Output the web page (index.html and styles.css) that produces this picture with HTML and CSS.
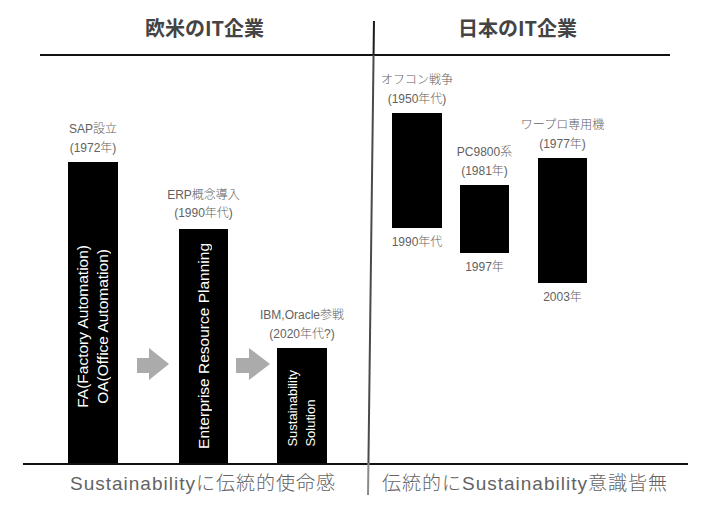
FILE: index.html
```html
<!DOCTYPE html>
<html lang="ja">
<head>
<meta charset="utf-8">
<title>欧米のIT企業 / 日本のIT企業</title>
<link rel="stylesheet" href="styles.css">
</head>
<body>
<div class="page">
  <header class="heads">
    <h1 class="title title-west">欧米のIT企業</h1>
    <h1 class="title title-jp">日本のIT企業</h1>
  </header>
  <div class="rule rule-top"></div>
  <main class="chart">
    <section class="chart-west">
      <div class="col col-w1">
        <p class="label">SAP設立<br>(1972年)</p>
        <div class="bar bar-w1"><span class="vtext vtext-lg">FA(Factory Automation)<br>OA(Office Automation)</span></div>
      </div>
      <svg class="arrow arrow-1" width="32" height="32" viewBox="0 0 32 32"><path d="M0 10H12V0L32 16L12 32V25H0Z" fill="#ababab"/></svg>
      <div class="col col-w2">
        <p class="label label-erp">ERP概念導入<br>(1990年代)</p>
        <div class="bar bar-w2"><span class="vtext vtext-lg">Enterprise Resource Planning</span></div>
      </div>
      <svg class="arrow arrow-2" width="34" height="32" viewBox="0 0 34 32"><path d="M0 10H13V0L34 16L13 32V25H0Z" fill="#ababab"/></svg>
      <div class="col col-w3">
        <p class="label">IBM,Oracle参戦<br>(2020年代?)</p>
        <div class="bar bar-w3"><span class="vtext vtext-sm">Sustainability<br>Solution</span></div>
      </div>
    </section>
    <section class="chart-jp">
      <div class="col col-j1">
        <p class="label">オフコン戦争<br>(1950年代)</p>
        <div class="bar bar-j1"></div>
        <p class="label label-below">1990年代</p>
      </div>
      <div class="col col-j2">
        <p class="label">PC9800系<br>(1981年)</p>
        <div class="bar bar-j2"></div>
        <p class="label label-below">1997年</p>
      </div>
      <div class="col col-j3">
        <p class="label">ワープロ専用機<br>(1977年)</p>
        <div class="bar bar-j3"></div>
        <p class="label label-below">2003年</p>
      </div>
    </section>
  </main>
  <div class="rule rule-bottom"></div>
  <footer class="foot">
    <p class="foot-text foot-west">Sustainabilityに伝統的使命感</p>
    <p class="foot-text foot-jp">伝統的にSustainability意識皆無</p>
  </footer>
  <div class="divider"></div>
</div>
</body>
</html>
```
FILE: styles.css
```css
html, body {
  margin: 0;
  padding: 0;
  background: #fff;
}
body {
  font-family: "Liberation Sans", "Noto Sans CJK JP", sans-serif;
}
.page {
  position: relative;
  width: 705px;
  height: 519px;
  overflow: hidden;
}

/* headings */
.heads {
  display: grid;
  grid-template-columns: 371px 1fr;
  height: 54px;
}
.title {
  margin: 0;
  padding-top: 16px;
  font-family: "Noto Sans CJK JP", sans-serif;
  font-size: 20px;
  font-weight: 700;
  line-height: 24px;
  color: #444;
  white-space: nowrap;
}
.title-west { padding-left: 145px; }
.title-jp { padding-left: 87px; }

/* rules */
.rule {
  height: 2px;
  background: #111;
}
.rule-top { margin: 0 35px 0 40px; }
.rule-bottom { margin: 0 17px 0 23px; height: 1.6px; }

/* chart */
.chart {
  display: grid;
  grid-template-columns: 371px 1fr;
  height: 407px;
}
.chart-west {
  display: flex;
  align-items: flex-end;
  padding-left: 68px;
}
.chart-jp {
  display: flex;
  align-items: flex-start;
}
.col {
  display: flex;
  flex-direction: column;
  align-items: center;
}
.label {
  margin: 0 -45px 4px;
  font-size: 12px;
  font-weight: 300;
  line-height: 19px;
  color: #626262;
  text-align: center;
  white-space: nowrap;
}
.label-erp { margin-bottom: 7px; line-height: 18px; }
.label-below { margin: 5px -45px 0; }

.bar {
  background: #000;
  align-self: stretch;
}
.col-w1 { width: 50px; }
.col-w2 { width: 49px; margin-left: 10px; }
.col-w3 { width: 50px; margin-left: 7px; }
.bar-w1 {
  height: 301px;
  display: flex;
  justify-content: center;
  align-items: center;
  padding-top: 27px;
  box-sizing: border-box;
}
.bar-w2 {
  height: 234px;
  display: flex;
  justify-content: center;
  align-items: center;
}
.bar-w3 {
  height: 115px;
  display: flex;
  justify-content: center;
  align-items: flex-end;
  padding-bottom: 16px;
  box-sizing: border-box;
}
.vtext {
  writing-mode: vertical-rl;
  transform: rotate(180deg);
  color: #fff;
  white-space: nowrap;
  font-family: "Liberation Sans", sans-serif;
}
.vtext-lg {
  font-size: 15.5px;
  line-height: 20px;
  text-align: center;
}
.vtext-sm {
  font-size: 13px;
  line-height: 18px;
  text-align: start;
}
.arrow {
  flex: none;
  display: block;
}
.arrow-1 { margin: 0 0 83px 19px; }
.arrow-2 { margin: 0 0 83px 8px; }

.col-j1 { width: 50px; margin: 15px 0 0 21px; }
.col-j2 { width: 49px; margin: 87px 0 0 18px; }
.col-j3 { width: 49px; margin: 60px 0 0 29px; }
.bar-j1 { height: 115px; }
.bar-j2 { height: 68px; }
.bar-j3 { height: 125px; }

/* footer */
.foot {
  display: grid;
  grid-template-columns: 371px 1fr;
  padding-top: 7px;
}
.foot-text {
  margin: 0;
  font-size: 19px;
  font-weight: 300;
  line-height: 24px;
  letter-spacing: 1px;
  color: #636363;
  white-space: nowrap;
}
.foot-west { padding-left: 70px; }
.foot-jp { padding-left: 11px; }

/* slanted divider between the two halves */
.divider {
  position: absolute;
  left: 369.5px;
  top: 21px;
  width: 1.5px;
  height: 474px;
  background: linear-gradient(to bottom, #1a1a1a 0 34px, #4a4a4a 34px 442px, #8a8a8a 442px);
  transform: rotate(0.72deg);
}
```
